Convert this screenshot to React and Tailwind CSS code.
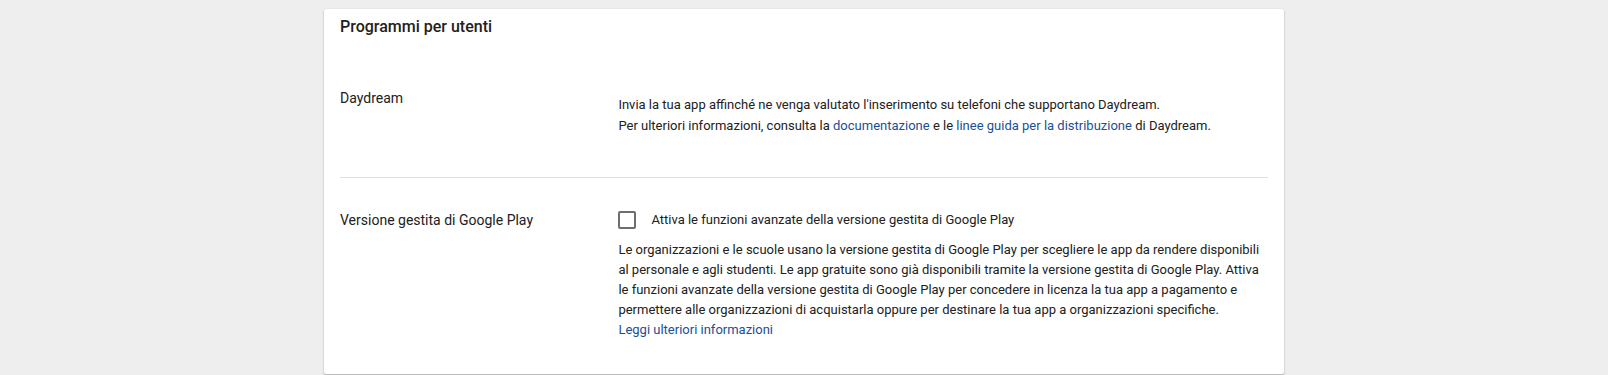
import React from "react";

export default function App() {
  return (
    <div className="min-h-[375px] w-full bg-[#eeeeee] pt-[9px] font-['Roboto',sans-serif] text-[#212121]">
      <div className="mx-auto w-[960px] rounded-[2px] bg-white px-4 pb-[34px] shadow-[0_1px_2px_rgba(0,0,0,0.28),0_0_1px_rgba(0,0,0,0.12)]">
        <h2 className="pt-[6px] text-[16px] font-medium leading-[24px]">Programmi per utenti</h2>

        <div className="flex pt-[49px] pb-[41px] text-[14px]">
          <div className="w-[30%] shrink-0 leading-[20px]">Daydream</div>
          <div className="mt-[6px] text-[13px] leading-[21px]">
            <div>Invia la tua app affinché ne venga valutato l'inserimento su telefoni che supportano Daydream.</div>
            <div>
              Per ulteriori informazioni, consulta la{" "}
              <a className="text-[#195096]">documentazione</a> e le{" "}
              <a className="text-[#195096]">linee guida per la distribuzione</a> di Daydream.
            </div>
          </div>
        </div>

        <div className="h-px bg-[#e0e0e0]" />

        <div className="flex pt-[32px] text-[14px]">
          <div className="w-[30%] shrink-0 leading-[20px]">Versione gestita di Google Play</div>
          <div className="flex-1">
            <label className="flex items-center text-[13px] leading-[20px]">
              <span className="h-[18px] w-[18px] shrink-0 rounded-[2px] border-2 border-[#6e6e6e] bg-white" />
              <span className="ml-[15px]">Attiva le funzioni avanzate della versione gestita di Google Play</span>
            </label>
            <p className="mt-[10px] text-[13px] leading-[20px]">
              Le organizzazioni e le scuole usano la versione gestita di Google Play per scegliere le app da rendere disponibili al personale e agli studenti. Le app gratuite sono già disponibili tramite la versione gestita di Google Play. Attiva le funzioni avanzate della versione gestita di Google Play per concedere in licenza la tua app a pagamento e permettere alle organizzazioni di acquistarla oppure per destinare la tua app a organizzazioni specifiche.
            </p>
            <a className="block text-[13px] leading-[20px] text-[#195096]">Leggi ulteriori informazioni</a>
          </div>
        </div>
      </div>
    </div>
  );
}
